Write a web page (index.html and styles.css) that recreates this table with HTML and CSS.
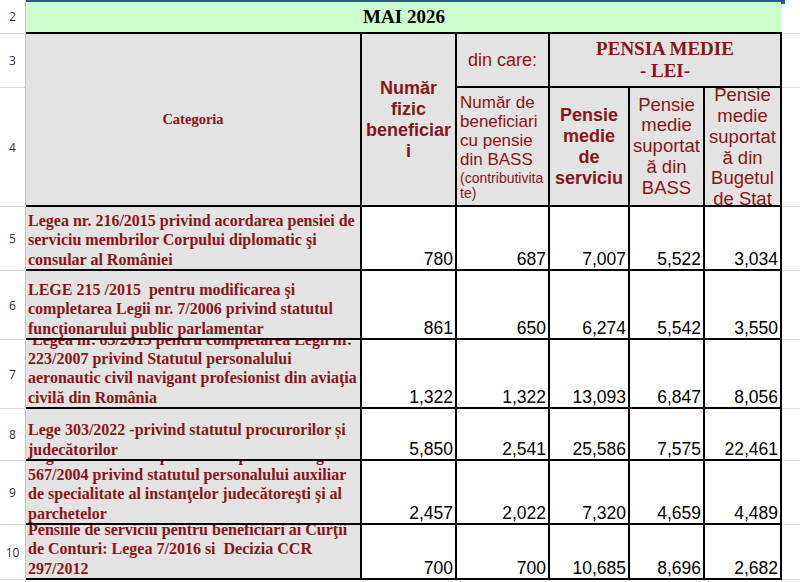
FILE: index.html
```html
<!DOCTYPE html>
<html lang="ro">
<head>
<meta charset="utf-8">
<title>Pensii de serviciu - MAI 2026</title>
<link rel="stylesheet" href="styles.css">
</head>
<body>
<div class="sheet">
  <div class="rh">2</div>
  <div class="title">MAI 2026</div>
  <div class="rest"></div>

  <div class="rh">3</div>
  <div class="hd cat"><div>Categoria</div></div>
  <div class="hd nf"><div>Număr<br>fizic<br>beneficiar<br>i</div></div>
  <div class="hd dc"><div>din care:</div></div>
  <div class="hd pm"><div>PENSIA MEDIE<br>- LEI-</div></div>
  <div class="rest"></div>

  <div class="rh">4</div>
  <div class="hd nb"><div>Număr de<br>beneficiari<br>cu pensie<br>din BASS<span class="small">(contributivita<br>te)</span></div></div>
  <div class="hd ps"><div>Pensie<br>medie<br>de<br>serviciu</div></div>
  <div class="hd pb"><div>Pensie<br>medie<br>suportat<br>ă din<br>BASS</div></div>
  <div class="hd pb pg"><div>Pensie<br>medie<br>suportat<br>ă din<br>Bugetul<br>de Stat</div></div>
  <div class="rest"></div>

  <div class="rh">5</div>
  <div class="c"><div>Legea nr. 216/2015 privind acordarea pensiei de<br>serviciu membrilor Corpului diplomatic şi<br>consular al României</div></div>
  <div class="n">780</div>
  <div class="n">687</div>
  <div class="n">7,007</div>
  <div class="n">5,522</div>
  <div class="n">3,034</div>
  <div class="rest"></div>

  <div class="rh">6</div>
  <div class="c"><div>LEGE 215 /2015 &nbsp;pentru modificarea şi<br>completarea Legii nr. 7/2006 privind statutul<br>funcţionarului public parlamentar</div></div>
  <div class="n">861</div>
  <div class="n">650</div>
  <div class="n">6,274</div>
  <div class="n">5,542</div>
  <div class="n">3,550</div>
  <div class="rest"></div>

  <div class="rh">7</div>
  <div class="c"><div>&nbsp;Legea nr. 83/2015 pentru completarea Legii nr.<br>223/2007 privind Statutul personalului<br>aeronautic civil navigant profesionist din aviaţia<br>civilă din România</div></div>
  <div class="n">1,322</div>
  <div class="n">1,322</div>
  <div class="n">13,093</div>
  <div class="n">6,847</div>
  <div class="n">8,056</div>
  <div class="rest"></div>

  <div class="rh">8</div>
  <div class="c"><div>Lege 303/2022 -privind statutul procurorilor și<br>judecătorilor</div></div>
  <div class="n">5,850</div>
  <div class="n">2,541</div>
  <div class="n">25,586</div>
  <div class="n">7,575</div>
  <div class="n">22,461</div>
  <div class="rest"></div>

  <div class="rh">9</div>
  <div class="c"><div>Legea nr. 156/2015 pentru completarea Legii nr.<br>567/2004 privind statutul personalului auxiliar<br>de specialitate al instanţelor judecătoreşti şi al<br>parchetelor</div></div>
  <div class="n">2,457</div>
  <div class="n">2,022</div>
  <div class="n">7,320</div>
  <div class="n">4,659</div>
  <div class="n">4,489</div>
  <div class="rest"></div>

  <div class="rh">10</div>
  <div class="c"><div>Pensiile de serviciu pentru beneficiari ai Curţii<br>de Conturi: Legea 7/2016 si &nbsp;Decizia CCR<br>297/2012</div></div>
  <div class="n">700</div>
  <div class="n">700</div>
  <div class="n">10,685</div>
  <div class="n">8,696</div>
  <div class="n">2,682</div>
  <div class="rest"></div>

  <div class="rh rh-last">11</div>
  <div class="blank"></div>
  <div class="blank"></div>
  <div class="blank"></div>
  <div class="blank"></div>
  <div class="blank"></div>
  <div class="blank"></div>
  <div class="rest"></div>
</div>
</body>
</html>
```

FILE: styles.css
```css
html, body {
  margin: 0;
  padding: 0;
  background: #ffffff;
}

.sheet {
  display: grid;
  grid-template-columns: 26px 336px 95px 93px 80px 75px 77px 1fr;
  grid-template-rows: 34px 54px 119px 64px 69px 69px 52px 64px 55px 24px;
  width: 800px;
  height: 582px;
  overflow: hidden;
}

.sheet > div {
  box-sizing: border-box;
  min-width: 0;
  min-height: 0;
}

.rh {
  display: flex;
  align-items: center;
  justify-content: center;
  border-right: 1px solid #c4c4c4;
  border-bottom: 1px solid #d6d6d6;
  font: 12px "Open Sans", "DejaVu Sans", sans-serif;
  color: #333333;
  background: #ffffff;
}

.rh-last {
  align-items: flex-start;
  padding-top: 1px;
}

.title {
  grid-column: span 6;
  position: relative;
  display: flex;
  align-items: center;
  justify-content: center;
  background: #ccffcc;
  border-top: 2px solid #2b5797;
  border-bottom: 2px solid #000000;
  font: bold 19px "Liberation Serif", serif;
  color: #000000;
}

.title::after {
  content: "";
  position: absolute;
  right: -3px;
  top: -2px;
  width: 4px;
  height: 4px;
  background: #2b5797;
}

.rest {
  border-bottom: 1px solid #e0e0e0;
}

.hd {
  display: flex;
  flex-direction: column;
  justify-content: center;
  align-items: center;
  text-align: center;
  overflow: hidden;
  background: #e3e3e3;
  border-right: 2px solid #000000;
  border-bottom: 2px solid #000000;
  color: #8a1515;
}

.cat {
  grid-row: span 2;
  font: bold 14.5px "Liberation Serif", serif;
}

.nf {
  grid-row: span 2;
  font: bold 18px/21px "Liberation Sans", Arial, sans-serif;
}

.dc {
  font: 18px/21px "Liberation Sans", Arial, sans-serif;
}

.pm {
  grid-column: span 3;
  font: bold 19px/22px "Liberation Serif", serif;
}

.nb {
  align-items: flex-start;
  text-align: left;
  padding-left: 3px;
  font: 17px/19px "Liberation Sans", Arial, sans-serif;
}

.nb .small {
  display: block;
  font-size: 14px;
  line-height: 14.5px;
  padding-top: 2px;
}

.ps {
  font: bold 18px/21px "Liberation Sans", Arial, sans-serif;
}

.pb {
  font: 18.5px/20.7px "Liberation Sans", Arial, sans-serif;
}

.pg {
  padding-top: 2px;
}

.c {
  display: flex;
  flex-direction: column;
  justify-content: flex-end;
  overflow: hidden;
  white-space: nowrap;
  padding-left: 2px;
  background: #e3e3e3;
  border-right: 2px solid #000000;
  border-bottom: 2px solid #000000;
  color: #8a1515;
  font: bold 16px/19.3px "Liberation Serif", serif;
}

.n {
  display: flex;
  align-items: flex-end;
  justify-content: flex-end;
  padding-right: 2px;
  background: #ffffff;
  border-right: 2px solid #000000;
  border-bottom: 2px solid #000000;
  color: #000000;
  font: 17.5px/19px "Liberation Sans", Arial, sans-serif;
}

.blank {
  border-right: 1px solid #d6d6d6;
}
```
